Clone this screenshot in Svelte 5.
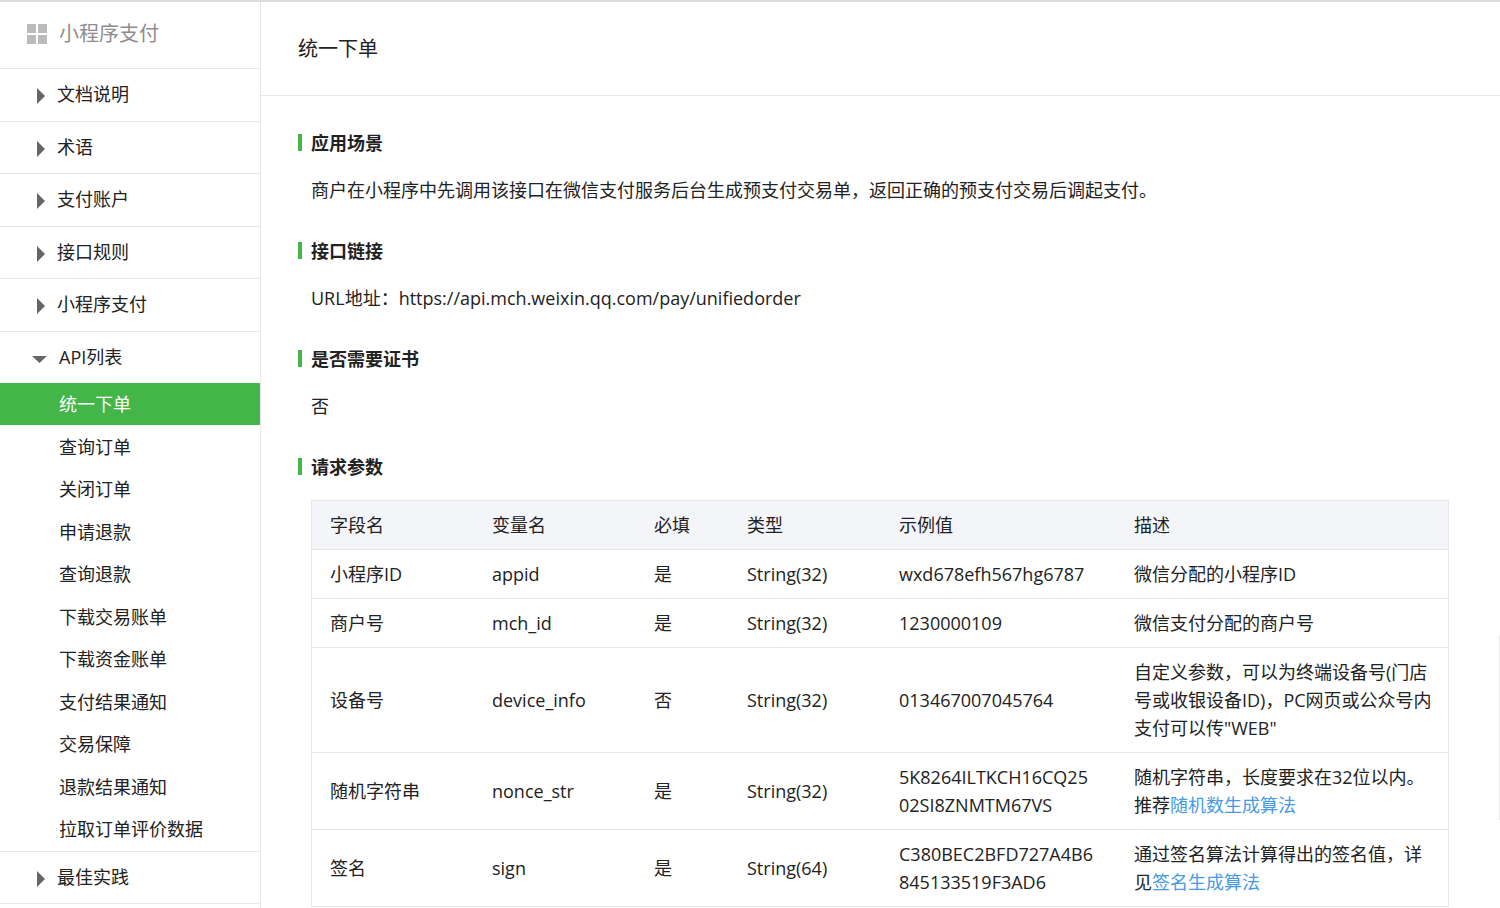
<script lang="ts">
  type Group = { title: string; items?: string[] };

  const groups: Group[] = [
    { title: '文档说明' },
    { title: '术语' },
    { title: '支付账户' },
    { title: '接口规则' },
    { title: '小程序支付' },
    {
      title: 'API列表',
      items: [
        '统一下单',
        '查询订单',
        '关闭订单',
        '申请退款',
        '查询退款',
        '下载交易账单',
        '下载资金账单',
        '支付结果通知',
        '交易保障',
        '退款结果通知',
        '拉取订单评价数据'
      ]
    },
    { title: '最佳实践' }
  ];

  const columns = ['字段名', '变量名', '必填', '类型', '示例值', '描述'];

  const params = [
    { name: '小程序ID', key: 'appid', required: '是', type: 'String(32)', sample: 'wxd678efh567hg6787', desc: '微信分配的小程序ID' },
    { name: '商户号', key: 'mch_id', required: '是', type: 'String(32)', sample: '1230000109', desc: '微信支付分配的商户号' },
    { name: '设备号', key: 'device_info', required: '否', type: 'String(32)', sample: '013467007045764', desc: '自定义参数，可以为终端设备号(门店号或收银设备ID)，PC网页或公众号内支付可以传"WEB"' },
    { name: '随机字符串', key: 'nonce_str', required: '是', type: 'String(32)', sample: '5K8264ILTKCH16CQ2502SI8ZNMTM67VS', desc: '随机字符串，长度要求在32位以内。推荐', link: '随机数生成算法' },
    { name: '签名', key: 'sign', required: '是', type: 'String(64)', sample: 'C380BEC2BFD727A4B6845133519F3AD6', desc: '通过签名算法计算得出的签名值，详见', link: '签名生成算法' }
  ];

  let opened = 'API列表';
  let current = '统一下单';

  function toggle(title: string) {
    opened = opened === title ? '' : title;
  }
</script>

<div class="page">
  <nav class="sidebar">
    <div class="product">
      <svg width="22" height="22" viewBox="0 0 22 22" aria-hidden="true">
        <path d="M1 1h9v9H1zM12 1h9v9h-9zM1 12h9v9H1zM12 12h9v9h-9z" />
      </svg>
      <span>小程序支付</span>
    </div>
    <ul class="groups">
      {#each groups as group}
        <li class="group" class:open={opened === group.title}>
          <button class="group-title" aria-expanded={opened === group.title} on:click={() => toggle(group.title)}>
            <svg class="arrow" width="16" height="16" viewBox="0 0 16 16" aria-hidden="true">
              {#if opened === group.title}
                <path d="M0 5h15L7.5 12z" />
              {:else}
                <path d="M5 0v16l8-8z" />
              {/if}
            </svg>
            <span>{group.title}</span>
          </button>
          {#if group.items && opened === group.title}
            <ul class="items">
              {#each group.items as item}
                <li>
                  <a href="#{item}" class:active={current === item} on:click={() => (current = item)}>{item}</a>
                </li>
              {/each}
            </ul>
          {/if}
        </li>
      {/each}
    </ul>
  </nav>

  <main class="main">
    <header class="title">
      <h1>统一下单</h1>
    </header>
    <div class="content">
      <section>
        <h2>应用场景</h2>
        <p>商户在小程序中先调用该接口在微信支付服务后台生成预支付交易单，返回正确的预支付交易后调起支付。</p>
      </section>
      <section>
        <h2>接口链接</h2>
        <p>URL地址：https://api.mch.weixin.qq.com/pay/unifiedorder</p>
      </section>
      <section>
        <h2>是否需要证书</h2>
        <p>否</p>
      </section>
      <section>
        <h2>请求参数</h2>
        <table>
          <thead>
            <tr>
              {#each columns as column}
                <th>{column}</th>
              {/each}
            </tr>
          </thead>
          <tbody>
            {#each params as param}
              <tr>
                <td>{param.name}</td>
                <td>{param.key}</td>
                <td>{param.required}</td>
                <td>{param.type}</td>
                <td class="sample">{param.sample}</td>
                <td class="desc">{param.desc}{#if param.link}<a href="#{param.link}">{param.link}</a>{/if}</td>
              </tr>
            {/each}
          </tbody>
        </table>
      </section>
    </div>
  </main>

  <aside class="float-edge"></aside>
</div>

<style>
  :global(body) {
    color: #222;
    background: #fff;
    font-family: 'Open Sans', 'Noto Sans CJK SC', sans-serif;
    font-size: 18px;
    line-height: 28px;
  }

  .page {
    position: relative;
    display: flex;
    min-height: 100vh;
    box-sizing: border-box;
    border-top: 2px solid #dcdce0;
  }

  ul {
    margin: 0;
    padding: 0;
    list-style: none;
  }

  .sidebar {
    flex: none;
    width: 260px;
    border-right: 1px solid #e7e7eb;
  }

  .product {
    display: flex;
    align-items: center;
    gap: 11px;
    height: 66px;
    box-sizing: border-box;
    padding: 0 0 2px 26px;
    color: #8d8d8d;
    font-size: 20px;
  }
  .product svg {
    fill: #bbb;
  }

  .group {
    border-top: 1px solid #e7e7eb;
  }
  .group:last-child {
    border-bottom: 1px solid #e7e7eb;
  }

  .group-title {
    display: flex;
    align-items: center;
    gap: 9px;
    width: 100%;
    height: 51px;
    padding: 0 0 2px 32px;
    border: none;
    background: none;
    color: inherit;
    font: inherit;
    cursor: pointer;
  }
  .group:nth-child(odd) .group-title {
    height: 52px;
  }
  .group:last-child .group-title {
    height: 51px;
  }
  .open .group-title {
    gap: 11px;
  }

  .arrow {
    margin-top: 4px;
    fill: #666;
  }

  .items {
    padding-bottom: 1px;
  }
  .items a {
    display: flex;
    align-items: center;
    height: 42px;
    padding-left: 59px;
    color: inherit;
    text-decoration: none;
  }
  .items li:nth-child(even) a {
    height: 43px;
  }
  .items a.active {
    background: #44b549;
    color: #fff;
  }

  .main {
    flex: 1;
    min-width: 0;
  }

  .title {
    display: flex;
    align-items: center;
    height: 93px;
    padding-left: 37px;
    border-bottom: 1px solid #e7e7eb;
  }

  h1 {
    margin: 0;
    font-size: 20px;
    font-weight: 400;
  }

  .content {
    padding: 35px 51px 0 37px;
  }

  h2 {
    display: flex;
    align-items: center;
    gap: 9px;
    height: 23px;
    margin: 0 0 22px;
    font-size: 18px;
    font-weight: 700;
  }
  h2::before {
    content: '';
    width: 4px;
    height: 17px;
    background: #44b549;
  }

  p {
    margin: 0 0 35px 13px;
  }

  table {
    width: calc(100% - 13px);
    margin-left: 13px;
    border: 1px solid #e7e7eb;
    border-collapse: collapse;
    table-layout: fixed;
  }

  th,
  td {
    padding: 10px 18px;
    border-bottom: 1px solid #e7e7eb;
    font-weight: 400;
    text-align: left;
  }
  th {
    background: #f4f5f9;
  }
  th:nth-child(1),
  th:nth-child(2) {
    width: 126px;
  }
  th:nth-child(3) {
    width: 57px;
  }
  th:nth-child(4) {
    width: 116px;
  }
  th:nth-child(5) {
    width: 199px;
  }

  .sample {
    word-break: break-all;
  }

  .desc {
    padding-right: 12px;
  }
  .desc a {
    color: #459ae9;
    text-decoration: none;
  }

  .float-edge {
    position: absolute;
    top: 633px;
    right: 0;
    height: 185px;
    border-left: 1px solid #e7e7eb;
  }
</style>
